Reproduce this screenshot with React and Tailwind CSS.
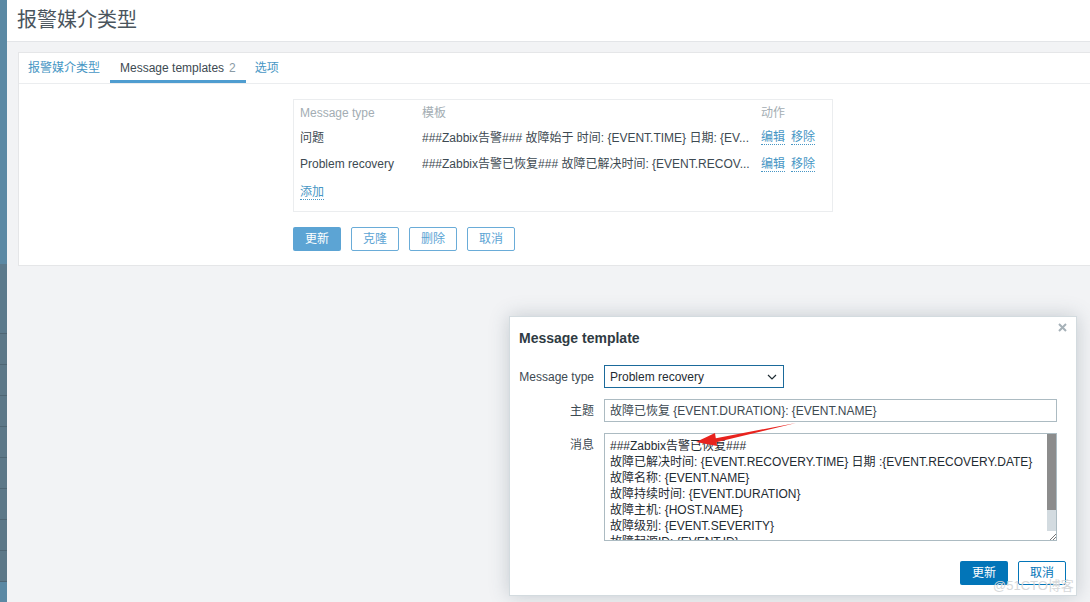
import React from "react";

const font = "font-['Liberation_Sans','Noto_Sans_CJK_SC',sans-serif]";

const rows = [
  { type: "问题", tpl: "###Zabbix告警### 故障始于 时间: {EVENT.TIME} 日期: {EV..." },
  { type: "Problem recovery", tpl: "###Zabbix告警已恢复### 故障已解决时间: {EVENT.RECOV..." },
];

const message = [
  "###Zabbix告警已恢复###",
  "故障已解决时间: {EVENT.RECOVERY.TIME} 日期 :{EVENT.RECOVERY.DATE}",
  "故障名称: {EVENT.NAME}",
  "故障持续时间: {EVENT.DURATION}",
  "故障主机: {HOST.NAME}",
  "故障级别: {EVENT.SEVERITY}",
  "故障起源ID: {EVENT.ID}",
];

function Sidebar() {
  return (
    <div className="w-[7px] shrink-0 flex flex-col bg-[#5b89a4]">
      <div className="h-[264px] bg-[#5b89a4]" />
      <div className="h-[70px] bg-[#5c7a8c] border-b border-[#4f6674]" />
      {[0, 1, 2, 3, 4, 5, 6, 7].map((i) => (
        <div key={i} className="h-[31px] bg-[#5d7888] border-b border-[#4f6674]" />
      ))}
      <div className="flex-1 bg-[#5b89a4]" />
    </div>
  );
}

function LinkText({ children }) {
  return (
    <span className="text-[#4796c4] border-b border-dotted border-[#4796c4] leading-[14px]">{children}</span>
  );
}

function MediaCard() {
  return (
    <div className="ml-[11px] bg-white border border-[#e5e6e8] border-r-0 pb-[14px]">
      <div className="h-[31px] flex items-stretch px-[9px] border-b border-[#ebedef] text-[12px]">
        <div className="flex items-center text-[#4796c4]">报警媒介类型</div>
        <div className="ml-[10px] px-[10px] flex items-center text-[#3d4a52] border-b-[3px] border-[#4f9dd0] pt-[3px]">
          Message templates <span className="ml-[5px] text-[#8a9ba5]">2</span>
        </div>
        <div className="px-[9px] flex items-center text-[#4796c4]">选项</div>
      </div>
      <div className="pl-[274px] pt-[15px]">
        <div className="w-[540px] border border-[#ebedef] px-[6px] pt-[1px] pb-[5px] text-[12px]">
          <div className="h-[24px] flex items-center text-[#a3adb3]">
            <div className="w-[122px]">Message type</div>
            <div className="w-[339px]">模板</div>
            <div>动作</div>
          </div>
          {rows.map((r, i) => (
            <div key={r.type} className={`${i === 0 ? "h-[25px]" : "h-[28px]"} flex items-center text-[#3d4a52]`}>
              <div className="w-[122px]">{r.type}</div>
              <div className="w-[339px] whitespace-nowrap overflow-hidden">{r.tpl}</div>
              <div className="flex gap-[6px]">
                <LinkText>编辑</LinkText>
                <LinkText>移除</LinkText>
              </div>
            </div>
          ))}
          <div className="h-[28px] flex items-center">
            <LinkText>添加</LinkText>
          </div>
        </div>
        <div className="mt-[15px] flex gap-[10px] text-[12px]">
          <div className="w-[48px] h-[24px] rounded-[2px] bg-[#5ca4d4] text-white flex items-center justify-center">更新</div>
          {["克隆", "删除", "取消"].map((t) => (
            <div key={t} className="w-[48px] h-[24px] rounded-[2px] border border-[#6aacd8] text-[#5ca4d4] flex items-center justify-center">{t}</div>
          ))}
        </div>
      </div>
    </div>
  );
}

function Modal() {
  return (
    <div className="absolute left-[509px] top-[316px] w-[568px] h-[280px] bg-white border border-[#d3dbdf] shadow-[0_0_18px_rgba(60,80,95,0.25)] text-[12px] text-[#1f2c33]">
      <div className="flex items-start justify-between pl-[9px] pr-[9px] pt-[12px]">
        <div className="text-[14px] font-bold text-[#2f3b43] leading-[18px]">Message template</div>
        <svg width="9" height="9" viewBox="0 0 9 9" className="mt-[-6px]">
          <path d="M1 1 L8 8 M8 1 L1 8" stroke="#a6b1b8" strokeWidth="2" />
        </svg>
      </div>
      <div className="mt-[18px] pl-[9px] pr-[19px] flex flex-col gap-[11px]">
        <div className="flex items-center gap-[10px]">
          <div className="w-[75px] text-right text-[#3d4a52]">Message type</div>
          <div className="w-[180px] h-[23px] border border-[#1b6a9b] flex items-center justify-between pl-[5px] pr-[6px]">
            <span>Problem recovery</span>
            <svg width="10" height="6" viewBox="0 0 10 6">
              <path d="M1 1 L5 5 L9 1" fill="none" stroke="#1f2c33" strokeWidth="1.2" />
            </svg>
          </div>
        </div>
        <div className="flex items-center gap-[10px]">
          <div className="w-[75px] text-right text-[#3d4a52]">主题</div>
          <div className="flex-1 h-[23px] border border-[#acbbc2] flex items-center px-[5px] text-[#3d4a52]">
            故障已恢复 {"{EVENT.DURATION}"}: {"{EVENT.NAME}"}
          </div>
        </div>
        <div className="flex items-start gap-[10px]">
          <div className="w-[75px] text-right text-[#3d4a52] pt-[3px]">消息</div>
          <div className="flex-1 h-[108px] border border-[#acbbc2] flex">
            <div className="flex-1 overflow-hidden pl-[5px] pt-[4px] leading-[16px] text-[#1f2c33]">
              {message.map((l) => (
                <div key={l} className="whitespace-nowrap">{l}</div>
              ))}
            </div>
            <div className="w-[9px] flex flex-col bg-[#d3dbe0]">
              <div className="h-[76px] bg-[#8c8c8c]" />
              <div className="flex-1" />
              <div className="h-[9px] bg-white flex items-end justify-end">
                <svg width="6" height="6" viewBox="0 0 6 6">
                  <path d="M6 0 L0 6 M6 3 L3 6" stroke="#777" strokeWidth="1" />
                </svg>
              </div>
            </div>
          </div>
        </div>
      </div>
      <div className="mt-[20px] pr-[10px] flex justify-end gap-[10px]">
        <div className="w-[48px] h-[24px] rounded-[2px] bg-[#0275b8] text-white flex items-center justify-center">更新</div>
        <div className="w-[48px] h-[24px] rounded-[2px] border border-[#0275b8] text-[#0275b8] flex items-center justify-center">取消</div>
      </div>
    </div>
  );
}

export default function App() {
  return (
    <div className={`relative w-[1090px] h-[602px] overflow-hidden flex bg-[#f2f3f5] ${font}`}>
      <Sidebar />
      <div className="flex-1 flex flex-col">
        <div className="h-[42px] bg-white border-b border-[#e3e5e8] flex items-center pl-[10px] pb-[2px]">
          <h1 className="text-[20px] text-[#4a555d] font-normal">报警媒介类型</h1>
        </div>
        <div className="pt-[10px]">
          <MediaCard />
        </div>
      </div>
      <Modal />
      <svg className="absolute left-0 top-0 pointer-events-none" width="1090" height="602">
        <polygon points="796,423 712,439 713,443" fill="#e8231e" />
        <polygon points="696,442 715,433 717,446" fill="#e8231e" />
      </svg>
      <div className="absolute left-[993px] top-[578px] text-[13px] text-[#d6d8da] leading-[16px]">@51CTO博客</div>
    </div>
  );
}
